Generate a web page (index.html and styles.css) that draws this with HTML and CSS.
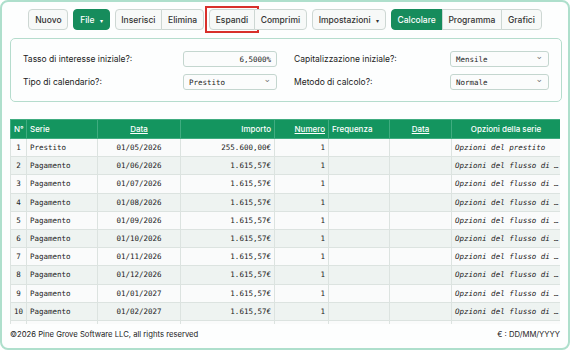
FILE: index.html
```html
<!DOCTYPE html>
<html lang="it">
<head>
    <meta charset="UTF-8">
    <meta name="viewport" content="width=device-width, initial-scale=1.0">
    <title>Calcolatore prestito</title>
    <link rel="stylesheet" href="styles.css">
</head>
<body>
    <div class="app">
        <div class="toolbar">
            <button class="btn">Nuovo</button>
            <button class="btn btn-green">File <span class="caret">▾</span></button>
            <div class="btn-group">
                <button class="btn">Inserisci</button>
                <button class="btn">Elimina</button>
            </div>
            <div class="btn-group">
                <button class="btn btn-marked">Espandi</button>
                <button class="btn">Comprimi</button>
            </div>
            <button class="btn">Impostazioni <span class="caret">▾</span></button>
            <div class="btn-group">
                <button class="btn btn-green">Calcolare</button>
                <button class="btn">Programma</button>
                <button class="btn">Grafici</button>
            </div>
        </div>

        <div class="settings">
            <label>Tasso di interesse iniziale?:</label>
            <div class="field field-num">6,5000%</div>
            <label class="col-right">Capitalizzazione iniziale?:</label>
            <div class="field field-select">Mensile <span class="chev">⌄</span></div>

            <label>Tipo di calendario?:</label>
            <div class="field field-select">Prestito <span class="chev">⌄</span></div>
            <label class="col-right">Metodo di calcolo?:</label>
            <div class="field field-select">Normale <span class="chev">⌄</span></div>
        </div>

        <div class="table-wrap">
            <table class="sched">
                <colgroup>
                    <col style="width:16px">
                    <col style="width:71px">
                    <col style="width:83px">
                    <col style="width:94px">
                    <col style="width:54px">
                    <col style="width:61px">
                    <col style="width:62px">
                    <col style="width:109px">
                </colgroup>
                <thead>
                    <tr>
                        <th class="c-left">N°</th>
                        <th class="c-left">Serie</th>
                        <th><a>Data</a></th>
                        <th class="c-right">Importo</th>
                        <th class="c-right"><a>Numero</a></th>
                        <th class="c-left">Frequenza</th>
                        <th><a>Data</a></th>
                        <th>Opzioni della serie</th>
                    </tr>
                </thead>
                <tbody id="rows"></tbody>
            </table>
        </div>

        <div class="footer">
            <span>©2026 Pine Grove Software LLC, all rights reserved</span>
            <span>€ : DD/MM/YYYY</span>
        </div>
    </div>

    <script>
        // righe del piano
        const rows = [
            ['Prestito', '01/05/2026', '255.600,00€', 'Opzioni del prestito'],
            ['Pagamento', '01/06/2026', '1.615,57€', 'Opzioni del flusso di …'],
            ['Pagamento', '01/07/2026', '1.615,57€', 'Opzioni del flusso di …'],
            ['Pagamento', '01/08/2026', '1.615,57€', 'Opzioni del flusso di …'],
            ['Pagamento', '01/09/2026', '1.615,57€', 'Opzioni del flusso di …'],
            ['Pagamento', '01/10/2026', '1.615,57€', 'Opzioni del flusso di …'],
            ['Pagamento', '01/11/2026', '1.615,57€', 'Opzioni del flusso di …'],
            ['Pagamento', '01/12/2026', '1.615,57€', 'Opzioni del flusso di …'],
            ['Pagamento', '01/01/2027', '1.615,57€', 'Opzioni del flusso di …'],
            ['Pagamento', '01/02/2027', '1.615,57€', 'Opzioni del flusso di …']
        ];
        const body = document.getElementById('rows');
        rows.forEach((r, i) => {
            body.insertAdjacentHTML('beforeend', `
                <tr>
                    <td class="c-num">${i + 1}</td>
                    <td>${r[0]}</td>
                    <td class="c-center">${r[1]}</td>
                    <td class="c-right">${r[2]}</td>
                    <td class="c-right">1</td>
                    <td></td>
                    <td></td>
                    <td class="c-opt">${r[3]}</td>
                </tr>`);
        });
        // riga successiva, tagliata dallo scorrimento
        body.insertAdjacentHTML('beforeend', '<tr>' + '<td></td>'.repeat(8) + '</tr>');
    </script>
</body>
</html>
```

FILE: styles.css
```css
* {
    box-sizing: border-box;
}
body {
    margin: 0;
    font-family: Inter, "Noto Sans", sans-serif;
    color: #222;
    background: #fff;
}
.app {
    width: 570px;
    height: 350px;
    border: 2px solid #aedfcc;
    border-radius: 8px;
    padding: 7px 6px 0 8px;
    background: #fdfefe;
    overflow: hidden;
}
.toolbar {
    display: flex;
    justify-content: center;
    gap: 5px;
    height: 21px;
    margin-left: -2px;
}
.btn {
    font-family: Inter, sans-serif;
    font-size: 8.5px;
    font-weight: 500;
    color: #333;
    background: #f7f9f8;
    border: 1px solid #cdd7d3;
    border-radius: 4px;
    padding: 0 5.8px;
    height: 21px;
    position: relative;
}
.btn-green {
    background: #168c5c;
    border-color: #168c5c;
    color: #fff;
}
.caret {
    font-size: 6px;
    margin-left: 3px;
}
.btn-group {
    display: flex;
}
.btn-group .btn {
    border-radius: 0;
    margin-left: -1px;
}
.btn-group .btn:first-child {
    border-radius: 4px 0 0 4px;
    margin-left: 0;
}
.btn-group .btn:last-child {
    border-radius: 0 4px 4px 0;
}
.btn-marked::after {
    content: "";
    position: absolute;
    left: -5px;
    right: -5px;
    top: -4px;
    bottom: -4px;
    border: 2px solid #d8302b;
}
.settings {
    margin-top: 8px;
    height: 64px;
    border: 1px solid #b5dccd;
    border-radius: 5px;
    padding: 12px 12px 0 12px;
    display: grid;
    grid-template-columns: 160px 94px 1fr 99px;
    grid-auto-rows: 16px;
    row-gap: 7px;
    align-items: center;
    font-size: 8.5px;
}
.settings .col-right {
    padding-left: 17px;
}
.field {
    height: 16px;
    border: 1px solid #c4d6cf;
    border-radius: 3px;
    background: #fbfcfc;
    font-family: "DejaVu Sans Mono", monospace;
    font-size: 7.5px;
    display: flex;
    align-items: center;
    padding: 0 5px;
    color: #222;
}
.field-num {
    justify-content: flex-end;
}
.field-select {
    justify-content: space-between;
    padding-left: 5px;
}
.chev {
    font-family: "DejaVu Sans", sans-serif;
    font-size: 9px;
    color: #777;
    margin-top: -6px;
}
.table-wrap {
    margin-top: 17px;
    width: 550px;
    height: 205px;
    overflow: hidden;
}
.sched {
    border-collapse: collapse;
    table-layout: fixed;
    width: 550px;
}
.sched th {
    background: #14955f;
    color: #fff;
    font-size: 8px;
    font-weight: 500;
    height: 19px;
    padding: 0 3px;
    border: 1px solid #40ac80;
    text-align: center;
}
.sched th a {
    text-decoration: underline;
}
.sched td {
    font-family: "DejaVu Sans Mono", monospace;
    font-size: 7.5px;
    height: 18.2px;
    padding: 0 3px;
    border: 1px solid #dce3e0;
    white-space: nowrap;
    overflow: hidden;
}
.sched tbody tr:nth-child(odd) {
    background: #fafbfb;
}
.sched tbody tr:nth-child(even) {
    background: #eef3f1;
}
.c-left {
    text-align: left !important;
}
.c-right {
    text-align: right !important;
}
.c-center {
    text-align: center;
}
.c-num {
    text-align: center;
    padding: 0 1px !important;
}
.sched td.c-opt {
    font-style: italic;
}
.footer {
    display: flex;
    justify-content: space-between;
    width: 550px;
    margin-top: 6px;
    font-size: 7.7px;
    color: #222;
}
```
